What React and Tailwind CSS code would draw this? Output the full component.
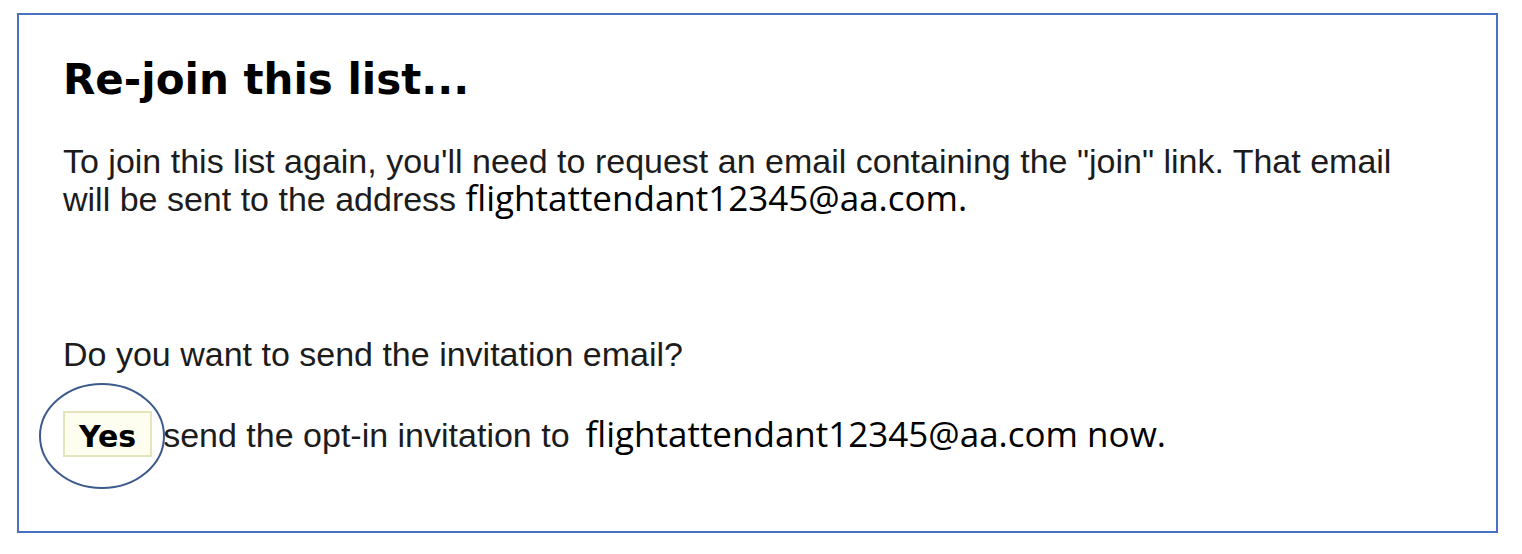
import React from "react";

const EMAIL = "flightattendant12345@aa.com";

export default function App() {
  return (
    <div className="w-[1522px] h-[554px] bg-white pt-[13px] pl-[17px]">
      <div className="w-[1481px] h-[520px] border-2 border-[#4a72c4] pl-[44px] pt-[40px] text-black">
        <h1 className="font-['DejaVu_Sans',sans-serif] font-bold text-[42px] leading-[50px]">
          Re-join this list...
        </h1>

        <p className="mt-[37px] font-['Liberation_Sans',Arial,sans-serif] text-[34px] leading-[38px] text-[#1c1c1c] whitespace-nowrap">
          To join this list again, you'll need to request an email containing the "join" link. That email
          <br />
          will be sent to the address{" "}
          <span className="inline-block font-['Open_Sans',sans-serif] text-[35px] leading-[36px] text-black">{EMAIL}.</span>
        </p>

        <p className="mt-[119px] font-['Liberation_Sans',Arial,sans-serif] text-[34px] leading-[35px] text-[#1c1c1c]">
          Do you want to send the invitation email?
        </p>

        {/* Yes row */}
        <div className="mt-[39px] flex items-baseline whitespace-nowrap">
          <div className="relative">
            <span className="block box-border h-[46px] bg-[#fdfdf0] border-2 border-[#e4e4bd] pl-[14px] pr-[14px] pt-[9px] font-['DejaVu_Sans',sans-serif] font-bold text-[30px] leading-none">
              Yes
            </span>
            <svg className="absolute left-[-24px] top-[-28px]" width="130" height="110" viewBox="0 0 130 110">
              <ellipse cx="63" cy="53" rx="62" ry="52" fill="none" stroke="#3c5a8c" strokeWidth="2" />
            </svg>
          </div>
          <span className="ml-[11px] font-['Liberation_Sans',Arial,sans-serif] text-[34px] leading-[46px] text-[#1c1c1c]">
            send the opt-in invitation to
          </span>
          <span className="ml-[16px] font-['Open_Sans',sans-serif] text-[35px] leading-[46px]">{EMAIL} now.</span>
        </div>
      </div>
    </div>
  );
}
